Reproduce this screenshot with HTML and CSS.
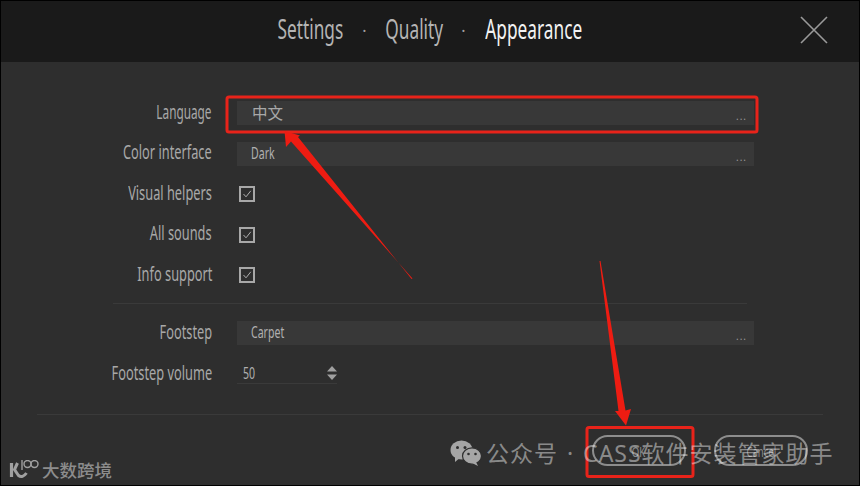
FILE: index.html
```html
<!DOCTYPE html>
<html lang="en">
<head>
<meta charset="utf-8">
<title>Appearance</title>
<link rel="stylesheet" href="styles.css">
</head>
<body>
<div class="window">
  <header class="head">
    <nav class="tabs">
      <span class="tab t-settings"><span class="sq">Settings</span></span>
      <span class="dot">·</span>
      <span class="tab t-quality"><span class="sq">Quality</span></span>
      <span class="dot">·</span>
      <span class="tab active t-appearance"><span class="sq">Appearance</span></span>
    </nav>
    <svg class="close" width="28" height="28" viewBox="0 0 28 28"><path d="M1 1L27 27M27 1L1 27" stroke="#9a9a9a" stroke-width="1.6" fill="none"/></svg>
  </header>
  <main class="content">
    <section class="group">
      <label class="label"><span class="sq lang">Language</span></label>
      <div class="field"><span class="cjk">中文</span><span class="more">...</span></div>
      <label class="label"><span class="sq">Color interface</span></label>
      <div class="field"><span class="sq val">Dark</span><span class="more">...</span></div>
      <label class="label"><span class="sq">Visual helpers</span></label>
      <div class="check"><svg width="16" height="16" viewBox="0 0 16 16"><rect x="1" y="1" width="14" height="14" fill="none" stroke="#a8a8a8" stroke-width="2"/><path d="M4.5 8L7 10.8L11.8 4.8" fill="none" stroke="#b0b0b0" stroke-width="1"/></svg></div>
      <label class="label"><span class="sq">All sounds</span></label>
      <div class="check"><svg width="16" height="16" viewBox="0 0 16 16"><rect x="1" y="1" width="14" height="14" fill="none" stroke="#a8a8a8" stroke-width="2"/><path d="M4.5 8L7 10.8L11.8 4.8" fill="none" stroke="#b0b0b0" stroke-width="1"/></svg></div>
      <label class="label"><span class="sq">Info support</span></label>
      <div class="check"><svg width="16" height="16" viewBox="0 0 16 16"><rect x="1" y="1" width="14" height="14" fill="none" stroke="#a8a8a8" stroke-width="2"/><path d="M4.5 8L7 10.8L11.8 4.8" fill="none" stroke="#b0b0b0" stroke-width="1"/></svg></div>
    </section>
    <hr class="rule rule-a">
    <section class="group group-b">
      <label class="label"><span class="sq">Footstep</span></label>
      <div class="field"><span class="sq val">Carpet</span><span class="more">...</span></div>
      <label class="label"><span class="sq">Footstep volume</span></label>
      <div class="stepper"><span class="sq num">50</span><svg width="10" height="16" viewBox="0 0 10 16"><path d="M5 1L10 6.5H0ZM5 15L10 9.5H0Z" fill="#a0a0a0"/></svg></div>
    </section>
    <hr class="rule rule-b">
    <footer class="actions">
      <button class="btn btn-ok"><span class="sq">OK</span></button>
      <button class="btn btn-cancel"><span class="sq">Cancel</span></button>
    </footer>
  </main>

  <svg class="notes" width="860" height="486" viewBox="0 0 860 486">
    <rect x="227" y="97" width="530" height="35" rx="2" fill="none" stroke="#e8231a" stroke-width="3"/>
    <rect x="587" y="427.500" width="106" height="49" rx="2" fill="none" stroke="#e8231a" stroke-width="3"/>
    <path d="M412.500 278.500L411.500 279L298 137L300 135.500L284.500 131L286 147L291 141.500Z" fill="#ee1c12"/>
    <path d="M600.500 261L599.500 261L618.500 411L615 411L626 425.500L631 409L625.500 410.500Z" fill="#ee1c12"/>
  </svg>

  <div class="mark-wechat">
    <svg width="32" height="26" viewBox="0 0 32 26">
      <ellipse cx="11.500" cy="10" rx="11" ry="9.500" fill="#a6a6a6"/>
      <path d="M5 16L5 22L11 17Z" fill="#a6a6a6"/>
      <ellipse cx="22" cy="16" rx="9.500" ry="8.200" fill="#a6a6a6" stroke="#2e2e2e" stroke-width="1.200"/>
      <path d="M26 22L28 26L22 23Z" fill="#a6a6a6"/>
      <circle cx="7.500" cy="7.500" r="1.500" fill="#2e2e2e"/>
      <circle cx="15" cy="7.500" r="1.500" fill="#2e2e2e"/>
      <circle cx="18.500" cy="14" r="1.300" fill="#2e2e2e"/>
      <circle cx="25.500" cy="14" r="1.300" fill="#2e2e2e"/>
    </svg>
    <span class="mark-text">公众号 · CASS软件安装管家助手</span>
  </div>
  <div class="mark-logo">
    <svg width="30" height="20" viewBox="0 0 30 20" fill="none" stroke="#a0a0a0">
      <path d="M2.500 3V17" stroke-width="3.200"/>
      <path d="M8.500 3L5.500 9.500L9.500 15.500C12 17.500 15 16.500 17.500 13" stroke-width="3"/>
      <path d="M13 0V10" stroke-width="1.400"/>
      <circle cx="18.500" cy="4" r="3.500" stroke-width="1.400"/>
      <circle cx="25.500" cy="4" r="3.500" stroke-width="1.400"/>
    </svg>
    <span class="logo-text">大数跨境</span>
  </div>
</div>
</body>
</html>
```
FILE: styles.css
```css
* { box-sizing: border-box; }
html, body { margin: 0; padding: 0; background: #000; }
body { width: 860px; height: 486px; overflow: hidden; }
.sq { display: inline-block; font-family: "Noto Sans", sans-serif; transform: scaleX(.64); white-space: nowrap; }

.window { position: relative; width: 860px; height: 486px; border: 1px solid #000; background: #2e2e2e; display: flex; flex-direction: column; overflow: hidden; }

.head { flex: 0 0 61px; background: #1a1a1a; position: relative; display: flex; justify-content: center; align-items: center; }
.tabs { display: flex; align-items: center; color: #b4b4b4; font-size: 27px; margin-top: -7px; }
.tab { display: flex; justify-content: center; }
.t-settings { width: 66px; }
.t-quality { width: 57px; }
.t-appearance { width: 98px; color: #f2f2f2; }
.dot { width: 42px; text-align: center; font-family: "Noto Sans", sans-serif; font-size: 16px; color: #a0a0a0; padding-top: 5px; }
.close { position: absolute; right: 31px; top: 15px; }

.content { flex: 1; display: flex; flex-direction: column; padding-top: 39px; }
.group { display: grid; grid-template-columns: 211px 517px; column-gap: 25px; grid-auto-rows: 24px; row-gap: 16.5px; align-items: center; }
.group-b { margin-top: 17px; row-gap: 17px; }
.label { display: flex; justify-content: flex-end; color: #a8a8a8; font-size: 20px; line-height: 24px; height: 24px; margin-top: -3px; }
.label .sq { transform-origin: right center; }
.label .lang { transform: scaleX(.59); }
.field { height: 24px; background: #383838; display: flex; align-items: center; justify-content: space-between; padding: 0 7px 0 14px; color: #b0b0b0; font-size: 16.5px; }
.field .sq { margin-top: -3px; }
.val { transform-origin: left center; }
.cjk { font-family: "Noto Sans CJK SC", sans-serif; font-size: 15.5px; color: #a8a8a8; padding-left: 1px; margin-top: -2px; }
.more { font-family: "Noto Sans", sans-serif; font-size: 10px; color: #9a9a9a; letter-spacing: 1px; padding-top: 6px; }
.check { height: 16px; margin-left: 2px; display: flex; }
.stepper { width: 100px; height: 22px; align-self: start; border-bottom: 1px solid #3a3a3a; display: flex; align-items: center; justify-content: space-between; padding: 0 0 0 6px; color: #b0b0b0; font-size: 16.5px; }
.num { transform-origin: left center; margin-top: -1px; }

.rule { border: 0; height: 1px; margin: 0; background: #3a3a3a; }
.rule-a { margin: 16px 0 0 112px; width: 634px; }
.rule-b { margin: 28px 0 0 36px; width: 786px; }

.actions { display: flex; margin: 20px 0 0 591px; gap: 28px; }
.btn { width: 94px; height: 31px; border: 2px solid #8d8d8d; border-radius: 16px; background: transparent; color: #8d8d8d; font-size: 15px; padding: 0; display: flex; align-items: center; justify-content: center; }

.notes { position: absolute; left: -1px; top: -1px; pointer-events: none; }
.mark-wechat { position: absolute; left: 449px; top: 438px; display: flex; align-items: center; gap: 4px; }
.mark-text { font-family: "Noto Sans", "Noto Sans CJK SC", sans-serif; font-size: 23px; line-height: 28px; letter-spacing: 1px; word-spacing: 2px; color: rgba(255,255,255,.46); white-space: nowrap; }
.mark-logo { position: absolute; left: 8px; top: 458px; display: flex; align-items: center; gap: 3px; }
.logo-text { font-family: "Noto Sans CJK SC", sans-serif; font-weight: 500; font-size: 17.5px; line-height: 22px; color: #8c8c8c; white-space: nowrap; }
```
